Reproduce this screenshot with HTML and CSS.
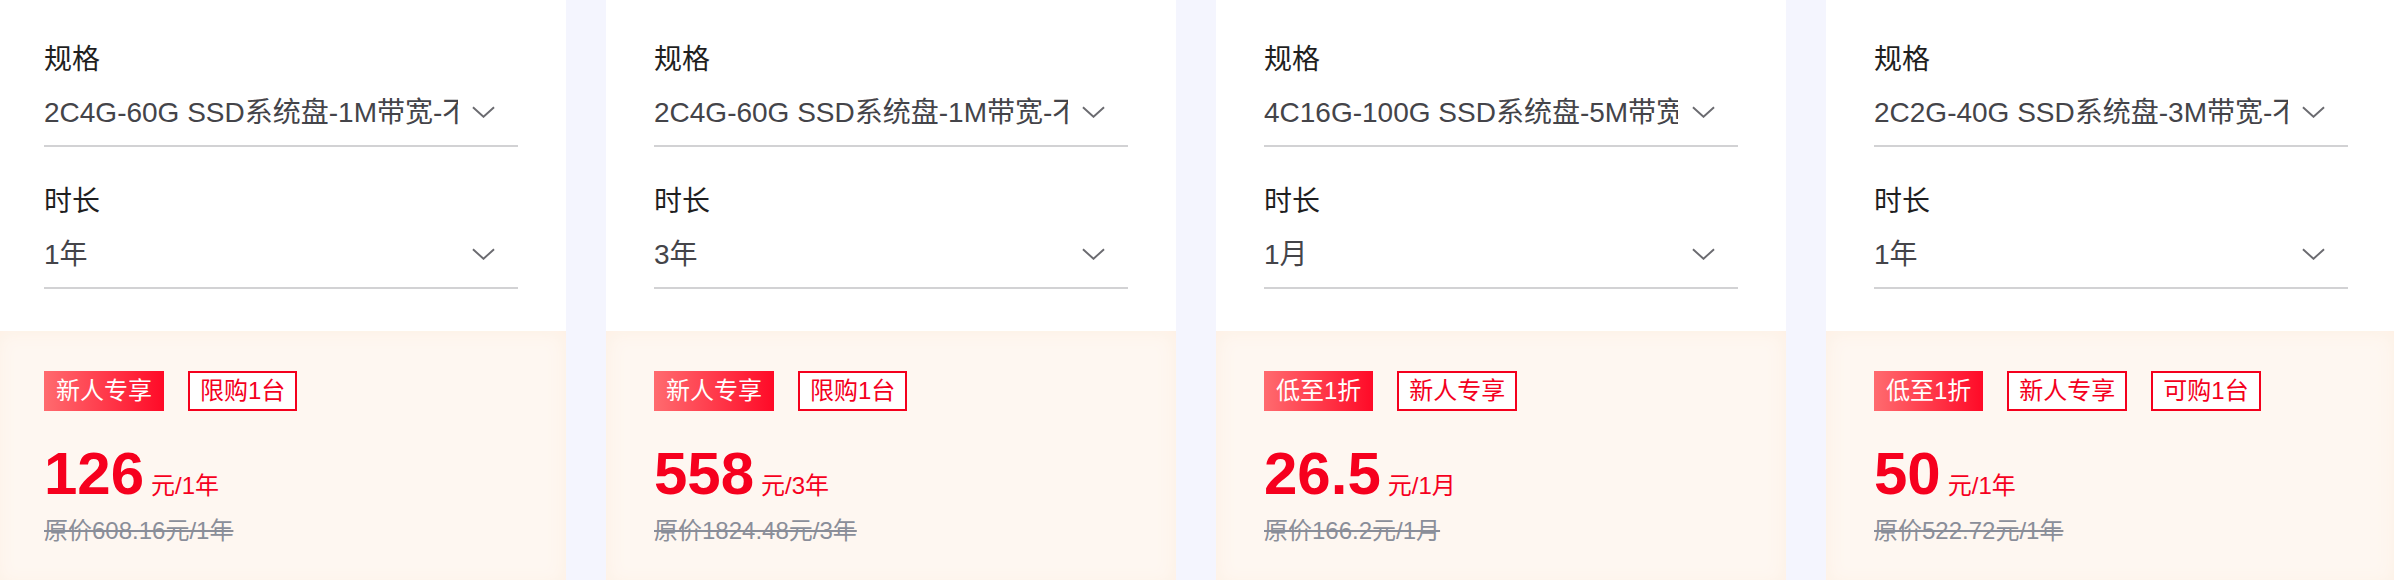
FILE: index.html
```html
<!DOCTYPE html>
<html lang="zh-CN">
<head>
<meta charset="utf-8">
<title>云服务器特惠</title>
<link rel="stylesheet" href="styles.css">
</head>
<body>
<div class="list">
  <div class="card">
    <div class="config">
      <div class="field">
        <div class="label">规格</div>
        <div class="select"><span class="value">2C4G-60G SSD系统盘-1M带宽-不限流量</span><svg class="chev" viewBox="0 0 24 12"><path d="M1 1 L12 11 L23 1"/></svg></div>
      </div>
      <div class="field">
        <div class="label">时长</div>
        <div class="select"><span class="value">1年</span><svg class="chev" viewBox="0 0 24 12"><path d="M1 1 L12 11 L23 1"/></svg></div>
      </div>
    </div>
    <div class="offer">
      <div class="tags"><span class="tag tag-fill">新人专享</span><span class="tag tag-line">限购1台</span></div>
      <div class="price"><span class="amount">126</span><span class="unit">元/1年</span></div>
      <div class="origin">原价608.16元/1年</div>
    </div>
  </div>

  <div class="card">
    <div class="config">
      <div class="field">
        <div class="label">规格</div>
        <div class="select"><span class="value">2C4G-60G SSD系统盘-1M带宽-不限流量</span><svg class="chev" viewBox="0 0 24 12"><path d="M1 1 L12 11 L23 1"/></svg></div>
      </div>
      <div class="field">
        <div class="label">时长</div>
        <div class="select"><span class="value">3年</span><svg class="chev" viewBox="0 0 24 12"><path d="M1 1 L12 11 L23 1"/></svg></div>
      </div>
    </div>
    <div class="offer">
      <div class="tags"><span class="tag tag-fill">新人专享</span><span class="tag tag-line">限购1台</span></div>
      <div class="price"><span class="amount">558</span><span class="unit">元/3年</span></div>
      <div class="origin">原价1824.48元/3年</div>
    </div>
  </div>

  <div class="card">
    <div class="config">
      <div class="field">
        <div class="label">规格</div>
        <div class="select"><span class="value">4C16G-100G SSD系统盘-5M带宽-不限流量</span><svg class="chev" viewBox="0 0 24 12"><path d="M1 1 L12 11 L23 1"/></svg></div>
      </div>
      <div class="field">
        <div class="label">时长</div>
        <div class="select"><span class="value">1月</span><svg class="chev" viewBox="0 0 24 12"><path d="M1 1 L12 11 L23 1"/></svg></div>
      </div>
    </div>
    <div class="offer">
      <div class="tags"><span class="tag tag-fill">低至1折</span><span class="tag tag-line">新人专享</span></div>
      <div class="price"><span class="amount">26.5</span><span class="unit">元/1月</span></div>
      <div class="origin">原价166.2元/1月</div>
    </div>
  </div>

  <div class="card">
    <div class="config">
      <div class="field">
        <div class="label">规格</div>
        <div class="select"><span class="value">2C2G-40G SSD系统盘-3M带宽-不限流量</span><svg class="chev" viewBox="0 0 24 12"><path d="M1 1 L12 11 L23 1"/></svg></div>
      </div>
      <div class="field">
        <div class="label">时长</div>
        <div class="select"><span class="value">1年</span><svg class="chev" viewBox="0 0 24 12"><path d="M1 1 L12 11 L23 1"/></svg></div>
      </div>
    </div>
    <div class="offer">
      <div class="tags"><span class="tag tag-fill">低至1折</span><span class="tag tag-line">新人专享</span><span class="tag tag-line">可购1台</span></div>
      <div class="price"><span class="amount">50</span><span class="unit">元/1年</span></div>
      <div class="origin">原价522.72元/1年</div>
    </div>
  </div>
</div>
</body>
</html>
```

FILE: styles.css
```css
html, body {
  margin: 0;
  padding: 0;
  overflow: hidden;
  background: #f4f5fe;
}

body {
  font-family: "Liberation Sans", "Noto Sans CJK SC", sans-serif;
  color: #1f1f1f;
}

.list {
  display: flex;
  gap: 40px;
  margin-left: -4px;
}

.card {
  flex: none;
  width: 570px;
  background: #ffffff;
  display: flex;
  flex-direction: column;
}

.config {
  padding: 40px 48px 42px;
  display: flex;
  flex-direction: column;
  gap: 35px;
}

.field {
  display: flex;
  flex-direction: column;
  gap: 9px;
}

.label {
  font-size: 28px;
  line-height: 40px;
  color: #1f1f1f;
}

.select {
  display: flex;
  align-items: center;
  height: 48px;
  padding-bottom: 8px;
  border-bottom: 2px solid #d2d2d4;
}

.value {
  flex: none;
  width: 414px;
  overflow: hidden;
  white-space: nowrap;
  font-size: 28px;
  line-height: 48px;
  color: #444449;
}

.chev {
  flex: none;
  width: 23px;
  height: 12px;
  margin-left: 14px;
  margin-top: -2px;
}

.chev path {
  fill: none;
  stroke: #6b6b70;
  stroke-width: 2;
}

.offer {
  flex: 1;
  background: #fef7f1;
  box-shadow: inset 0 0 20px #fdefe2;
  padding: 40px 48px 39px;
}

.tags {
  display: flex;
  gap: 24px;
}

.tag {
  height: 40px;
  line-height: 40px;
  font-size: 24px;
  padding: 0 12px;
  box-sizing: border-box;
}

.tag-fill {
  color: #ffffff;
  background: linear-gradient(90deg, #ff6b6f 0%, #ff0a27 100%);
}

.tag-line {
  color: #f4001d;
  background: #ffffff;
  border: 2px solid #f4001d;
  line-height: 36px;
  padding: 0 10px;
}

.price {
  display: flex;
  align-items: baseline;
  margin-top: 33px;
  color: #f6001e;
}

.amount {
  font-size: 60px;
  line-height: 60px;
  font-weight: bold;
}

.unit {
  font-size: 24px;
  margin-left: 7px;
}

.origin {
  margin-top: 11px;
  font-size: 24px;
  line-height: 32px;
  color: #8a8e99;
  text-decoration: line-through;
}
```
